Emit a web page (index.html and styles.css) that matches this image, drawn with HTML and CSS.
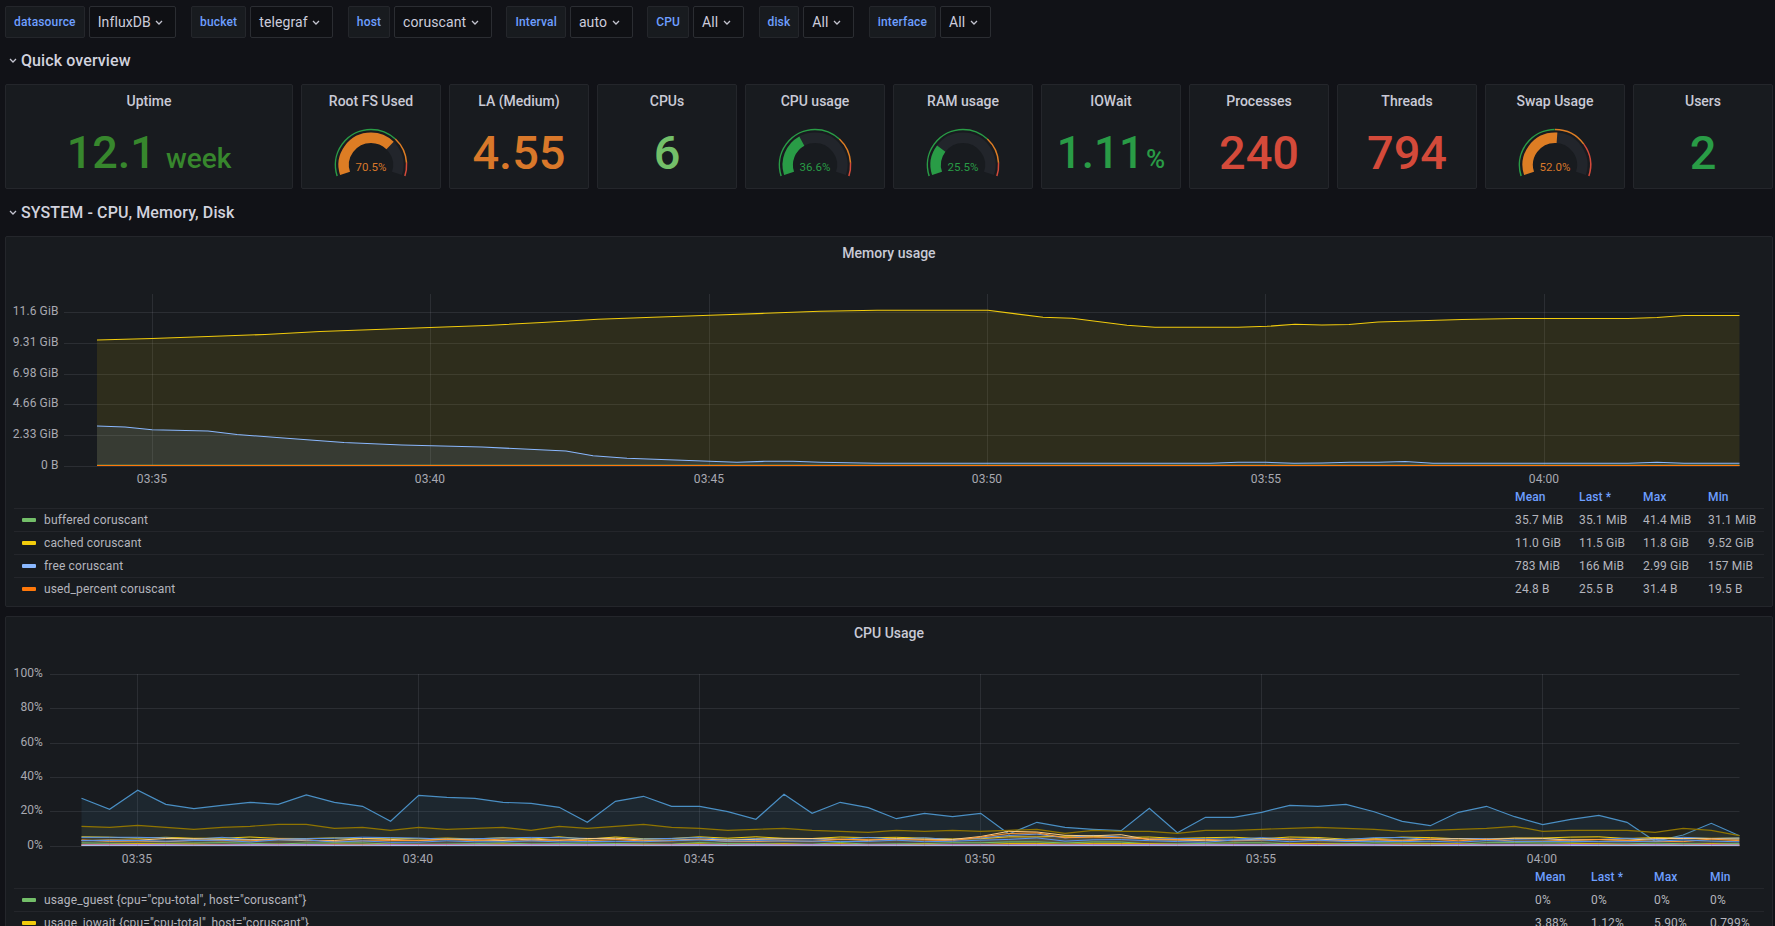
FILE: index.html
```html
<!DOCTYPE html>
<html lang="en">
<head>
<meta charset="utf-8">
<title>Telegraf dashboard</title>
<link rel="stylesheet" href="styles.css">
</head>
<body>
<div class="page">
  <div class="toolbar">
    <div class="var"><span class="var-label">datasource</span><span class="var-select">InfluxDB<svg class="chev" viewBox="0 0 8 5"><path d="M1 1l3 3 3-3"/></svg></span></div>
    <div class="var"><span class="var-label">bucket</span><span class="var-select">telegraf<svg class="chev" viewBox="0 0 8 5"><path d="M1 1l3 3 3-3"/></svg></span></div>
    <div class="var"><span class="var-label">host</span><span class="var-select">coruscant<svg class="chev" viewBox="0 0 8 5"><path d="M1 1l3 3 3-3"/></svg></span></div>
    <div class="var"><span class="var-label">Interval</span><span class="var-select">auto<svg class="chev" viewBox="0 0 8 5"><path d="M1 1l3 3 3-3"/></svg></span></div>
    <div class="var"><span class="var-label">CPU</span><span class="var-select">All<svg class="chev" viewBox="0 0 8 5"><path d="M1 1l3 3 3-3"/></svg></span></div>
    <div class="var"><span class="var-label">disk</span><span class="var-select">All<svg class="chev" viewBox="0 0 8 5"><path d="M1 1l3 3 3-3"/></svg></span></div>
    <div class="var"><span class="var-label">interface</span><span class="var-select">All<svg class="chev" viewBox="0 0 8 5"><path d="M1 1l3 3 3-3"/></svg></span></div>
  </div>

  <h2 class="row-title first"><svg class="chev" viewBox="0 0 8 5"><path d="M1 1l3 3 3-3"/></svg>Quick overview</h2>

  <div class="stats">
    <div class="stat"><div class="stat-title">Uptime</div><div class="stat-value mid dark-green">12.1<span class="unit-word">week</span></div></div>
    <div class="stat"><div class="stat-title">Root FS Used</div>
      <svg class="gauge" viewBox="0 0 90 65">
        <path class="g-track" pathLength="100" d="M19.04 53.44A27.3 27.3 0 1 1 70.96 53.44"/>
        <path class="g-fill s-orange" pathLength="100" stroke-dasharray="70.5 100" d="M19.04 53.44A27.3 27.3 0 1 1 70.96 53.44"/>
        <path class="g-th s-green" pathLength="100" stroke-dasharray="70 100" d="M11.14 56A35.6 35.6 0 1 1 78.86 56"/>
        <path class="g-th s-orange" pathLength="100" stroke-dasharray="20 100" stroke-dashoffset="-70" d="M11.14 56A35.6 35.6 0 1 1 78.86 56"/>
        <path class="g-th s-red" pathLength="100" stroke-dasharray="10 100" stroke-dashoffset="-90" d="M11.14 56A35.6 35.6 0 1 1 78.86 56"/>
        <text class="g-text t-orange" x="45" y="51">70.5%</text>
      </svg></div>
    <div class="stat"><div class="stat-title">LA (Medium)</div><div class="stat-value orange">4.55</div></div>
    <div class="stat"><div class="stat-title">CPUs</div><div class="stat-value light-green">6</div></div>
    <div class="stat"><div class="stat-title">CPU usage</div>
      <svg class="gauge" viewBox="0 0 90 65">
        <path class="g-track" pathLength="100" d="M19.04 53.44A27.3 27.3 0 1 1 70.96 53.44"/>
        <path class="g-fill s-green" pathLength="100" stroke-dasharray="36.6 100" d="M19.04 53.44A27.3 27.3 0 1 1 70.96 53.44"/>
        <path class="g-th s-green" pathLength="100" stroke-dasharray="70 100" d="M11.14 56A35.6 35.6 0 1 1 78.86 56"/>
        <path class="g-th s-orange" pathLength="100" stroke-dasharray="20 100" stroke-dashoffset="-70" d="M11.14 56A35.6 35.6 0 1 1 78.86 56"/>
        <path class="g-th s-red" pathLength="100" stroke-dasharray="10 100" stroke-dashoffset="-90" d="M11.14 56A35.6 35.6 0 1 1 78.86 56"/>
        <text class="g-text t-green" x="45" y="51">36.6%</text>
      </svg></div>
    <div class="stat"><div class="stat-title">RAM usage</div>
      <svg class="gauge" viewBox="0 0 90 65">
        <path class="g-track" pathLength="100" d="M19.04 53.44A27.3 27.3 0 1 1 70.96 53.44"/>
        <path class="g-fill s-green" pathLength="100" stroke-dasharray="25.5 100" d="M19.04 53.44A27.3 27.3 0 1 1 70.96 53.44"/>
        <path class="g-th s-green" pathLength="100" stroke-dasharray="70 100" d="M11.14 56A35.6 35.6 0 1 1 78.86 56"/>
        <path class="g-th s-orange" pathLength="100" stroke-dasharray="20 100" stroke-dashoffset="-70" d="M11.14 56A35.6 35.6 0 1 1 78.86 56"/>
        <path class="g-th s-red" pathLength="100" stroke-dasharray="10 100" stroke-dashoffset="-90" d="M11.14 56A35.6 35.6 0 1 1 78.86 56"/>
        <text class="g-text t-green" x="45" y="51">25.5%</text>
      </svg></div>
    <div class="stat"><div class="stat-title">IOWait</div><div class="stat-value small green">1.11<span class="unit-pct">%</span></div></div>
    <div class="stat"><div class="stat-title">Processes</div><div class="stat-value red">240</div></div>
    <div class="stat"><div class="stat-title">Threads</div><div class="stat-value red">794</div></div>
    <div class="stat"><div class="stat-title">Swap Usage</div>
      <svg class="gauge" viewBox="0 0 90 65">
        <path class="g-track" pathLength="100" d="M19.04 53.44A27.3 27.3 0 1 1 70.96 53.44"/>
        <path class="g-fill s-orange" pathLength="100" stroke-dasharray="52 100" d="M19.04 53.44A27.3 27.3 0 1 1 70.96 53.44"/>
        <path class="g-th s-green" pathLength="100" stroke-dasharray="50 100" d="M11.14 56A35.6 35.6 0 1 1 78.86 56"/>
        <path class="g-th s-orange" pathLength="100" stroke-dasharray="25 100" stroke-dashoffset="-50" d="M11.14 56A35.6 35.6 0 1 1 78.86 56"/>
        <path class="g-th s-red" pathLength="100" stroke-dasharray="25 100" stroke-dashoffset="-75" d="M11.14 56A35.6 35.6 0 1 1 78.86 56"/>
        <text class="g-text t-orange" x="45" y="51">52.0%</text>
      </svg></div>
    <div class="stat"><div class="stat-title">Users</div><div class="stat-value green">2</div></div>
  </div>

  <h2 class="row-title second"><svg class="chev" viewBox="0 0 8 5"><path d="M1 1l3 3 3-3"/></svg>SYSTEM - CPU, Memory, Disk</h2>

  <section class="panel memory">
    <div class="panel-title">Memory usage</div>
    <svg class="chart" width="1766" height="218" viewBox="6 270 1766 218">
      <path class="grid" d="M64 312.5H1739.5M64 343.5H1739.5M64 374.5H1739.5M64 404.5H1739.5M64 435.5H1739.5M64 466.5H1739.5M152.5 294V466M430.5 294V466M709.5 294V466M987.5 294V466M1265.5 294V466M1544.5 294V466"/>
      <path class="fill-yellow" d="M97 340L152 338.5L208 336.5L265 334.5L320 331.5L376 329.5L430 327.5L486 325.5L542 322.5L598 319.3L653 317.3L710 315.3L765 313.3L820 311.3L877 310.3L988 310.3L1043 317.3L1072 318.3L1127 325.3L1155 327.3L1238 327.3L1267 326.3L1295 324.3L1322 325L1349 324.5L1378 322L1462 319.5L1515 318.5L1628 318.5L1657 317.5L1684 315.5L1739.5 315.5V466H97Z"/>
      <path class="fill-blue" d="M97 426L125 427L152 429.7L208 431L237 434.5L290 438.5L344 442.5L402 445L482 447L566 451L593 455.7L627 458.3L682 460.3L737 462.3L765 461.3L793 461.3L820 462.3L877 463.3L1210 463.3L1238 462.3L1266 462.3L1294 463.3L1322 463L1350 462.3L1378 462.3L1405 461.5L1433 463.3L1628 463.3L1657 462.3L1684 463.3L1739.5 463.3V466H97Z"/>
      <polyline class="line l-green" points="97,465.3 1739.5,465.3"/>
      <polyline class="line l-yellow" points="97,340 152,338.5 208,336.5 265,334.5 320,331.5 376,329.5 430,327.5 486,325.5 542,322.5 598,319.3 653,317.3 710,315.3 765,313.3 820,311.3 877,310.3 988,310.3 1043,317.3 1072,318.3 1127,325.3 1155,327.3 1238,327.3 1267,326.3 1295,324.3 1322,325 1349,324.5 1378,322 1462,319.5 1515,318.5 1628,318.5 1657,317.5 1684,315.5 1739.5,315.5"/>
      <polyline class="line l-blue" points="97,426 125,427 152,429.7 208,431 237,434.5 290,438.5 344,442.5 402,445 482,447 566,451 593,455.7 627,458.3 682,460.3 737,462.3 765,461.3 793,461.3 820,462.3 877,463.3 1210,463.3 1238,462.3 1266,462.3 1294,463.3 1322,463 1350,462.3 1378,462.3 1405,461.5 1433,463.3 1628,463.3 1657,462.3 1684,463.3 1739.5,463.3"/>
      <polyline class="line l-orange" points="97,465.5 1739.5,465.5"/>
      <g class="axis-y">
        <text x="58.5" y="315">11.6 GiB</text><text x="58.5" y="346">9.31 GiB</text><text x="58.5" y="377">6.98 GiB</text><text x="58.5" y="407">4.66 GiB</text><text x="58.5" y="438">2.33 GiB</text><text x="58.5" y="469">0 B</text>
      </g>
      <g class="axis-x">
        <text x="152" y="483">03:35</text><text x="430" y="483">03:40</text><text x="709" y="483">03:45</text><text x="987" y="483">03:50</text><text x="1266" y="483">03:55</text><text x="1544" y="483">04:00</text>
      </g>
    </svg>
    <div class="legend">
      <div class="lg-row lg-head"><span></span><span>Mean</span><span>Last *</span><span>Max</span><span>Min</span></div>
      <div class="lg-row"><span class="lg-name"><i class="mark m-green"></i>buffered coruscant</span><span>35.7 MiB</span><span>35.1 MiB</span><span>41.4 MiB</span><span>31.1 MiB</span></div>
      <div class="lg-row"><span class="lg-name"><i class="mark m-yellow"></i>cached coruscant</span><span>11.0 GiB</span><span>11.5 GiB</span><span>11.8 GiB</span><span>9.52 GiB</span></div>
      <div class="lg-row"><span class="lg-name"><i class="mark m-blue"></i>free coruscant</span><span>783 MiB</span><span>166 MiB</span><span>2.99 GiB</span><span>157 MiB</span></div>
      <div class="lg-row"><span class="lg-name"><i class="mark m-orange"></i>used_percent coruscant</span><span>24.8 B</span><span>25.5 B</span><span>31.4 B</span><span>19.5 B</span></div>
    </div>
  </section>

  <section class="panel cpu">
    <div class="panel-title">CPU Usage</div>
    <svg class="chart" width="1766" height="218" viewBox="6 650 1766 218">
      <path class="grid" d="M50 674.5H1739.5M50 708.5H1739.5M50 743.5H1739.5M50 777.5H1739.5M50 811.5H1739.5M50 846.5H1739.5M137.5 674V846M418.5 674V846M699.5 674V846M980.5 674V846M1261.5 674V846M1542.5 674V846"/>
      <g id="cpu-series"></g>
      <g class="axis-y">
        <text x="43" y="677">100%</text><text x="43" y="711">80%</text><text x="43" y="746">60%</text><text x="43" y="780">40%</text><text x="43" y="814">20%</text><text x="43" y="849">0%</text>
      </g>
      <g class="axis-x">
        <text x="137" y="863">03:35</text><text x="418" y="863">03:40</text><text x="699" y="863">03:45</text><text x="980" y="863">03:50</text><text x="1261" y="863">03:55</text><text x="1542" y="863">04:00</text>
      </g>
    </svg>
    <div class="legend">
      <div class="lg-row lg-head"><span></span><span>Mean</span><span>Last *</span><span>Max</span><span>Min</span></div>
      <div class="lg-row"><span class="lg-name"><i class="mark m-green"></i>usage_guest {cpu="cpu-total", host="coruscant"}</span><span>0%</span><span>0%</span><span>0%</span><span>0%</span></div>
      <div class="lg-row"><span class="lg-name"><i class="mark m-yellow"></i>usage_iowait {cpu="cpu-total", host="coruscant"}</span><span>3.88%</span><span>1.12%</span><span>5.90%</span><span>0.799%</span></div>
    </div>
  </section>
</div>
<script src="chart.js"></script>
</body>
</html>
```
FILE: styles.css
```css
* { box-sizing: border-box; }
html, body { margin: 0; height: 100%; overflow: hidden; background: #111217; }
body { font-family: Roboto, "Liberation Sans", sans-serif; color: #ccccdc; font-size: 12px; }
.page { padding: 6px 2px 0 5px; }

.toolbar { display: flex; gap: 14.7px; height: 32px; }
.var { display: flex; gap: 4px; }
.var-label, .var-select { display: flex; align-items: center; height: 32px; border-radius: 2px; }
.var-label { padding: 0 8px; background: #181b1f; border: 1px solid #24262b; color: #6e9fff; font-size: 12px; font-weight: 500; letter-spacing: 0.15px; }
.var-select { padding: 0 12px 0 8px; background: #0f1014; border: 1px solid #2b2d32; font-size: 14px; letter-spacing: 0.1px; }
.chev { width: 8px; height: 5px; fill: none; stroke: #c4c4d0; stroke-width: 1.3; }
.var-select .chev { margin-left: 4.5px; }

.row-title { display: flex; align-items: center; height: 20px; margin: 0 0 0 4px; font-size: 16px; font-weight: 500; color: #d2d2de; letter-spacing: 0.1px; }
.row-title .chev { margin-right: 4px; }
.row-title.first { margin-top: 12px; margin-bottom: 14px; }
.row-title.second { margin-top: 13px; margin-bottom: 14px; }

.stats { display: grid; grid-template-columns: 288px repeat(10, 1fr); gap: 8px; }
.stat { height: 105px; padding-top: 8px; background: #181b1f; border: 1px solid #24262b; border-radius: 2px; text-align: center; }
.stat-title { height: 16px; line-height: 16px; font-size: 14px; font-weight: 500; color: #c9cad6; }
.stat-value { margin-top: 21px; line-height: 46px; font-size: 47px; font-weight: 500; white-space: nowrap; }
.stat-value.mid { font-size: 45px; }
.stat-value.small { font-size: 44px; }
.unit-word { margin-left: 10px; font-size: 28px; }
.unit-pct { margin-left: 2px; font-size: 26px; }
.dark-green { color: #37872d; }
.green { color: #299c46; }
.light-green { color: #73bf69; }
.orange { color: #d9782a; }
.red { color: #d44a3a; }

.gauge { display: block; width: 90px; height: 65px; margin: 11px auto 0; }
.g-track, .g-fill { fill: none; stroke-width: 10.4; }
.g-track { stroke: #22252b; }
.g-th { fill: none; stroke-width: 1.5; }
.s-green { stroke: #299c46; }
.s-orange { stroke: #dd7d24; }
.s-red { stroke: #d44a3a; }
.g-text { font-size: 11.5px; text-anchor: middle; }
.t-green { fill: #299c46; }
.t-orange { fill: #d9782a; }

.panel { background: #181b1f; border: 1px solid #24262b; border-radius: 2px; padding-bottom: 6px; }
.cpu { margin-top: 9px; }
.panel-title { height: 33px; line-height: 33px; text-align: center; font-size: 14px; font-weight: 500; color: #c9cad6; }
.chart { display: block; }
.grid { fill: none; stroke: rgba(204, 204, 220, 0.11); stroke-width: 1; }
.fill-yellow { fill: #f2cc0c; fill-opacity: 0.1; stroke: none; }
.fill-blue { fill: #8ab8ff; fill-opacity: 0.1; stroke: none; }
.line { fill: none; stroke-width: 1.1; }
.l-yellow { stroke: #f2cc0c; }
.l-blue { stroke: #8ab8ff; }
.l-orange { stroke: #ff780a; stroke-width: 1; }
.l-green { stroke: #73bf69; }
.axis-y text, .axis-x text { font-size: 12px; fill: #a8a9b1; letter-spacing: 0.1px; }
.axis-y text { text-anchor: end; }
.axis-x text { text-anchor: middle; }

.legend { padding: 0 8px; }
.lg-row { display: grid; height: 23px; align-items: center; border-top: 1px solid #24262b; color: #b4b5bd; letter-spacing: 0.15px; }
.memory .lg-row { grid-template-columns: 1fr 64px 64px 65px 56px; }
.cpu .lg-row { grid-template-columns: 1fr 56px 63px 56px 54px; }
.lg-head { height: 20px; padding-bottom: 2px; border-top: 0; color: #6e9fff; font-weight: 500; }
.lg-name { display: flex; align-items: center; white-space: nowrap; }
.mark { width: 14px; height: 4px; margin: 0 8px; border-radius: 1px; }
.m-green { background: #73bf69; }
.m-yellow { background: #f2cc0c; }
.m-blue { background: #8ab8ff; }
.m-orange { background: #ff780a; }
```
FILE: chart.js
```js
// Draws the CPU usage series: two measured series and a band of small, noisy ones.
(function () {
  var NS = 'http://www.w3.org/2000/svg';
  var X0 = 81.5, STEP = 28.1, BASE = 846;
  var host = document.getElementById('cpu-series');

  var user = [798.3,809.3,790.3,804.3,808.7,805.3,802.3,804.3,795,802.3,806.3,821.3,795.3,797.3,798.3,802.3,803.3,807.3,822.3,801.3,796.3,806.3,806.3,811.7,819.3,794.3,813.3,802.3,807.7,818.7,813.3,816.7,813.3,834,822.3,827.3,829.3,830.7,808.3,832.7,817.3,817.3,812.3,805.3,806.3,804.3,811.7,821.3,825.7,812.3,806.3,816.7,824.7,819.3,815.3,822.3,841.3,835,823.3,835.7];
  var sysZ = [199,202,196,202,208,202,199,193,193,205,202,211,202,208,205,202,211,199,205,199,193,202,205,211,208,205,211,214,217,211,214,211,214,211,208,220,211,214,214,220,211,211,208,205,202,205,208,214,211,208,205,199,214,211,211,211,217,205,211,227];
  var system = sysZ.map(function (z) { return 760 + z / 3; });

  function noisy(seed, level, spread, bump) {
    var s = seed, out = [];
    for (var i = 0; i < 60; i++) {
      s = (s * 16807) % 2147483647;
      var r = (s % 1000) / 1000 - 0.5;
      var d = Math.abs(i - 33.6);
      var extra = d < 2 ? bump * (1 - d / 2) : 0;
      var side = Math.abs(i - 36.2) < 1 ? bump * 0.4 : 0;
      out.push(BASE - level - r * spread - extra - side);
    }
    return out;
  }

  function draw(values, color, fillAlpha, width) {
    var pts = values.map(function (y, i) { return (X0 + STEP * i).toFixed(1) + ',' + y.toFixed(1); });
    var area = document.createElementNS(NS, 'polygon');
    area.setAttribute('points', pts.join(' ') + ' 1739.5,846 81.5,846');
    area.setAttribute('fill', color);
    area.setAttribute('fill-opacity', fillAlpha);
    host.appendChild(area);
    var line = document.createElementNS(NS, 'polyline');
    line.setAttribute('points', pts.join(' '));
    line.setAttribute('fill', 'none');
    line.setAttribute('stroke', color);
    line.setAttribute('stroke-width', width);
    host.appendChild(line);
  }

  draw(user, '#4a8fc4', 0.1, 1.2);
  draw(system, '#8f7400', 0.1, 1.2);
  [
    [11, '#f2cc0c', 8, 2.6, 2],
    [23, '#5794f2', 7.6, 2.6, 5],
    [37, '#ffcb7d', 6.4, 2.8, 10],
    [53, '#ff9830', 5.8, 3, 8],
    [41, '#5794f2', 5, 2.6, 4],
    [67, '#73bf69', 2.6, 1.6, 2],
    [71, '#e0b400', 1.6, 1.6, 1],
    [83, '#f2495c', 0.9, 0.8, 0],
    [97, '#b877d9', 1.2, 0.6, 0],
    [101, '#a8c4e8', 0.6, 0.2, 0]
  ].forEach(function (s) {
    draw(noisy(s[0] * 7919, s[2], s[3], s[4]), s[1], 0.07, 1);
  });
})();
```
